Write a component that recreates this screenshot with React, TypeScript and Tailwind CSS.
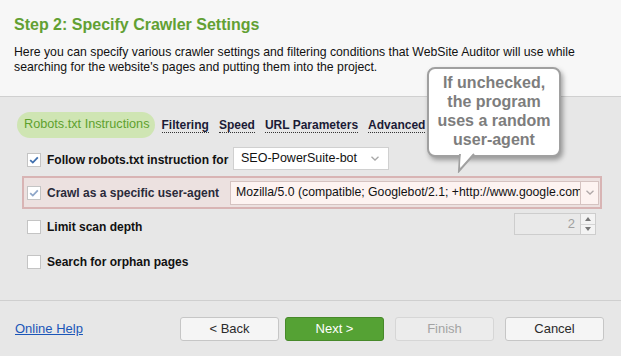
import React from 'react';

const TABS = ['Filtering', 'Speed', 'URL Parameters', 'Advanced'];

function Check({ checked, faded }: { checked?: boolean; faded?: boolean }) {
  return (
    <span className="flex h-[14px] w-[14px] shrink-0 items-center justify-center border border-[#c4c4c4] bg-white">
      {checked && (
        <svg width="10" height="10" viewBox="0 0 10 10">
          <path
            d="M1.2 5.2 L3.8 7.6 L8.8 2.4"
            fill="none"
            stroke={faded ? '#8ea6c8' : '#3f6fae'}
            strokeWidth="1.8"
          />
        </svg>
      )}
    </span>
  );
}

function Chevron({ color = '#a8a8a8' }: { color?: string }) {
  return (
    <svg width="8" height="5" viewBox="0 0 8 5">
      <path d="M0.5 0.8 L4 4 L7.5 0.8" fill="none" stroke={color} strokeWidth="1.3" />
    </svg>
  );
}

function Button({ label, variant = 'default' }: { label: string; variant?: 'default' | 'primary' | 'disabled' }) {
  const styles = {
    default: 'bg-[#f5f5f5] border-[#c6c6c6] text-[#2b2b2b]',
    primary: 'bg-[#55a234] border-[#47892a] text-white',
    disabled: 'bg-[#ececec] border-[#d6d6d6] text-[#a3a3a3]',
  }[variant];
  return (
    <button className={`flex h-[24px] w-[99px] shrink-0 items-center justify-center rounded-[3px] border text-[13px] leading-none ${styles}`}>
      {label}
    </button>
  );
}

export default function App() {
  return (
    <div className="relative flex h-[356px] w-[621px] flex-col overflow-hidden bg-[#e7e7e7] font-['Liberation_Sans',Arial,sans-serif] text-[#111]">
      {/* Header */}
      <div className="h-[97px] shrink-0 border-b border-[#d0d0d0] bg-[#f7f7f7] px-[14px] pt-[15px]">
        <h1 className="text-[16px] font-bold leading-[20px] text-[#62a033]">Step 2: Specify Crawler Settings</h1>
        <p className="mt-[10px] whitespace-nowrap text-[12.25px] leading-[15px] text-[#111]">
          Here you can specify various crawler settings and filtering conditions that WebSite Auditor will use while
          <br />
          searching for the website's pages and putting them into the project.
        </p>
      </div>

      {/* Body */}
      <div className="h-[204px] shrink-0 overflow-hidden border-b border-[#cfcfcf]">
        {/* Tabs */}
        <div className="ml-[17px] mt-[15px] flex h-[26px] items-center gap-[10px] whitespace-nowrap">
          <span className="-mr-[3px] flex h-[26px] items-center rounded-full bg-[#cfe5b3] pl-[7px] pr-[5px] text-[12.7px] text-[#5ea12e]">
            Robots.txt Instructions
          </span>
          {TABS.map((t) => (
            <span key={t} className="border-b border-dotted border-[#333] text-[12px] font-bold leading-[14px] text-[#1b1b36]">
              {t}
            </span>
          ))}
        </div>

        {/* Row 1 */}
        <div className="ml-[27px] mt-[8px] flex h-[24px] items-center whitespace-nowrap">
          <div className="flex w-[206px] shrink-0 items-center pt-[3px]">
            <Check checked />
            <span className="ml-[6px] text-[12px] font-bold">Follow robots.txt instruction for</span>
          </div>
          <div className="flex h-[23px] w-[156px] items-center justify-between border border-[#d0d0d0] bg-white pl-[7px] pr-[9px] text-[12.5px]">
            SEO-PowerSuite-bot
            <Chevron />
          </div>
        </div>

        {/* Row 2 highlighted */}
        <div className="ml-[22px] mr-[19px] mt-[6px] flex h-[33px] items-center whitespace-nowrap border-2 border-[#d8b4b4] bg-[#ece1e0] pl-[3px] pr-[1px]">
          <Check checked faded />
          <span className="ml-[6px] w-[183px] shrink-0 text-[12px] font-bold text-[#2a2a3a]">Crawl as a specific user-agent</span>
          <div className="flex h-[24px] min-w-0 flex-1 items-center border border-[#d5c3c1] bg-[#fdf3f1]">
            <span className="min-w-0 flex-1 overflow-hidden pl-[5px] text-[12.25px]">
              Mozilla/5.0 (compatible; Googlebot/2.1; +http://www.google.com/bot.html)
            </span>
            <span className="flex h-full w-[18px] shrink-0 items-center justify-center border-l border-[#d5c3c1]">
              <Chevron color="#b0a8a8" />
            </span>
          </div>
        </div>

        {/* Row 3 */}
        <div className="ml-[27px] mr-[25px] mt-[4px] flex h-[22px] items-center whitespace-nowrap">
          <div className="flex items-center pt-[5px]">
            <Check />
            <span className="ml-[6px] text-[12px] font-bold">Limit scan depth</span>
          </div>
          <div className="ml-auto flex h-[22px]">
            <div className="flex w-[67px] items-center justify-end border border-[#cdcdcd] bg-[#e9e9e9] pr-[5px] text-[13px] text-[#a0a0a0]">
              2
            </div>
            <div className="flex w-[15px] flex-col border border-l-0 border-[#cdcdcd] bg-[#f3f3f3]">
              <span className="flex flex-1 items-center justify-center border-b border-[#d5d5d5]">
                <svg width="6" height="4" viewBox="0 0 6 4"><path d="M0 4 L3 0 L6 4Z" fill="#777" /></svg>
              </span>
              <span className="flex flex-1 items-center justify-center">
                <svg width="6" height="4" viewBox="0 0 6 4"><path d="M0 0 L3 4 L6 0Z" fill="#777" /></svg>
              </span>
            </div>
          </div>
        </div>

        {/* Row 4 */}
        <div className="ml-[27px] mt-[16px] flex h-[22px] items-center whitespace-nowrap">
          <Check />
          <span className="ml-[6px] text-[12px] font-bold">Search for orphan pages</span>
        </div>
      </div>

      {/* Footer */}
      <div className="flex h-[55px] shrink-0 items-center pl-[15px] pr-[17px]">
        <a className="text-[13px] text-[#1b56b8] underline">Online Help</a>
        <div className="ml-auto flex">
          <Button label="< Back" />
          <span className="ml-[6px]"><Button label="Next >" variant="primary" /></span>
          <span className="ml-[11px]"><Button label="Finish" variant="disabled" /></span>
          <span className="ml-[11px]"><Button label="Cancel" /></span>
        </div>
      </div>

      {/* Tooltip */}
      <div className="absolute left-[427px] top-[67px] w-[134px]">
        <div className="relative rounded-[8px] border-2 border-[#a0a0a0] bg-white pb-[6px] pt-[4px] text-center text-[16px] font-bold leading-[19px] text-[#7d7d7d] shadow-[2px_3px_5px_rgba(0,0,0,0.35)]">
          If unchecked,
          <br />
          the program
          <br />
          uses a random
          <br />
          user-agent
        </div>
        <svg className="absolute left-[30px] top-[86px]" width="22" height="20" viewBox="0 0 22 20">
          <path d="M3 1 L2 18 L17 1" fill="#fff" stroke="#a0a0a0" strokeWidth="2" />
          <path d="M4 0 L16 0 L3 14Z" fill="#fff" />
        </svg>
      </div>
    </div>
  );
}
